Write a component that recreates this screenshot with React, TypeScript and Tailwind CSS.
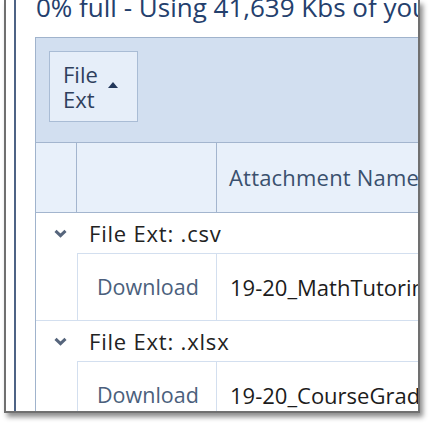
const font = { fontFamily: '"Open Sans", "Noto Sans", sans-serif' };

function GroupRow({ label }: { label: string }) {
  return (
    <div className="h-[40px] flex items-center">
      <svg width="13" height="9" viewBox="0 0 13 9" className="ml-[18px] mt-[1px] shrink-0">
        <polyline points="1.5,1.8 6.5,6.6 11.5,1.8" fill="none" stroke="#56657c" strokeWidth="3" />
      </svg>
      <span className="ml-[22px] text-[22px] tracking-[0.8px] text-[#222222] leading-none whitespace-nowrap">
        {label}
      </span>
    </div>
  );
}

function DataRow({ name, last }: { name: string; last?: boolean }) {
  return (
    <div className={"flex " + (last ? "" : "border-b border-[#d3dfef]")}>
      <div className="w-[41px] shrink-0" />
      <div className="flex border-l border-t border-[#d3dfef] h-[67px] flex-1">
        <div className="w-[139px] shrink-0 border-r border-[#d3dfef] flex items-center pl-[19px] text-[21.5px] text-[#4b5f7c]">
          Download
        </div>
        <div className="flex items-center pl-[13px] text-[22px] text-[#1c1c1c] whitespace-nowrap">{name}</div>
      </div>
    </div>
  );
}

export default function App() {
  return (
    <div className="w-[433px] h-[426px] bg-white overflow-hidden" style={font}>
      <div className="ml-[4px] w-[416px] h-[413px] border-x-2 border-b-2 border-[#707070] bg-white shadow-[3px_4px_5px_rgba(0,0,0,0.45)] flex overflow-hidden">
        <div className="ml-[8px] w-[2px] shrink-0 bg-[#4e6385]" />
        <div className="ml-[19px] flex-1 min-w-0 overflow-hidden">
          <div className="h-[37px] overflow-hidden">
            <div className="mt-[-8px] ml-[1px] text-[26px] leading-[30px] text-[#24406d] whitespace-nowrap">
              0% full - Using 41,639 Kbs of your 512,000 Kbs
            </div>
          </div>
          <div className="w-[700px] border border-[#a0b3cc]">
            {/* group-by panel */}
            <div className="h-[104px] bg-[#d2dff0] pt-[13px] pl-[13px]">
              <div className="w-[89px] h-[71px] border border-[#a9bcd5] bg-[#e6eef9] flex items-center pl-[13px]">
                <span className="text-[22px] leading-[25px] text-[#2f3f5d]">
                  File
                  <br />
                  Ext
                </span>
                <svg width="10" height="6" viewBox="0 0 10 6" className="ml-[10px] mb-[3px]">
                  <polygon points="0,6 5,0 10,6" fill="#22375a" />
                </svg>
              </div>
            </div>
            {/* column headers */}
            <div className="flex h-[71px] border-y border-[#a3b5ce] bg-[#e8f0fa]">
              <div className="w-[41px] shrink-0 border-r border-[#a3b5ce]" />
              <div className="w-[140px] shrink-0 border-r border-[#a3b5ce]" />
              <div className="flex items-center pl-[12px] text-[22px] tracking-[0.2px] text-[#3a506e] whitespace-nowrap">
                Attachment Name
              </div>
            </div>
            <GroupRow label="File Ext: .csv" />
            <DataRow name="19-20_MathTutoringLog.csv" />
            <GroupRow label="File Ext: .xlsx" />
            <DataRow name="19-20_CourseGrades.xlsx" last />
          </div>
        </div>
      </div>
    </div>
  );
}
